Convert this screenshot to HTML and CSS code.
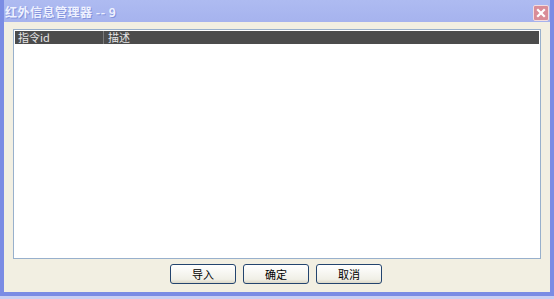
FILE: index.html
```html
<!DOCTYPE html>
<html>
    <head>
        <title>红外信息管理器</title>
        <link rel="stylesheet" href="styles.css">
    </head>
    <body>
        <div class="Window">
            <div class="TitleBar">
                <span class="TitleText">红外信息管理器 -- 9</span>
                <span class="CloseBtn">
                    <svg width="14" height="14" viewBox="0 0 14 14">
                        <path d="M4 4 L10 10 M10 4 L4 10" stroke="#fff" stroke-width="2.2" stroke-linecap="square"/>
                    </svg>
                </span>
            </div>
            <div class="Client">
                <div class="ListBox">
                    <div class="ListHead">
                        <span class="ColId">指令id</span>
                        <span class="ColDesc">描述</span>
                    </div>
                </div>
                <div class="Buttons">
                    <button class="Btn">导入</button>
                    <button class="Btn">确定</button>
                    <button class="Btn">取消</button>
                </div>
            </div>
        </div>
    </body>
</html>
```

FILE: styles.css
```css
body {
    margin: 0;
    background-color: #c9cff3;
    font-family: "Noto Sans CJK SC", "DejaVu Sans", sans-serif;
}
.Window {
    width: 546px;
    height: 292px;
    border-left: 4px solid #7b8ce4;
    border-right: 4px solid #7b8ce4;
    border-bottom: 4px solid #7b8ce4;
    display: flex;
    flex-direction: column;
}
.TitleBar {
    height: 22px;
    background: linear-gradient(#aebbf1, #a6b3ee);
    display: flex;
    align-items: center;
    justify-content: space-between;
    padding: 0 1px 0 1px;
}
.TitleText {
    color: #eef1ff;
    font-size: 12px;
    font-weight: bold;
    /* Looks like the XP caption */
    text-shadow: 1px 1px 0 #8393dc;
    letter-spacing: 0.5px;
}
.CloseBtn {
    width: 14px;
    height: 14px;
    background-color: #d98d98;
    border: 1px solid #f3dde0;
    border-radius: 2px;
    display: flex;
    margin-top: 4px;
}
.Client {
    flex: 1;
    background-color: #f2efe2;
    padding: 7px 9px 0 9px;
}
.ListBox {
    height: 228px;
    background-color: #fff;
    border: 1px solid #98b0cc;
}
.ListHead {
    height: 13px;
    margin: 1px 1px 0 1px;
    background-color: #4c4c4c;
    display: flex;
    font-size: 11px;
    line-height: 13px;
    color: #e6e6e6;
}
.ColId {
    width: 85px;
    padding-left: 3px;
    border-right: 1px solid #7a7a7a;
}
.ColDesc {
    padding-left: 4px;
}
.Buttons {
    display: flex;
    justify-content: center;
    gap: 7px;
    margin-top: 5px;
    padding-right: 2px;
}
.Btn {
    width: 66px;
    height: 20px;
    font-family: "Noto Sans CJK SC", sans-serif;
    font-size: 11px;
    color: #000;
    background: linear-gradient(#ffffff, #f0efe6 80%, #dcd8c8);
    border: 1px solid #23446e;
    border-radius: 3px;
    padding: 0;
}
```
